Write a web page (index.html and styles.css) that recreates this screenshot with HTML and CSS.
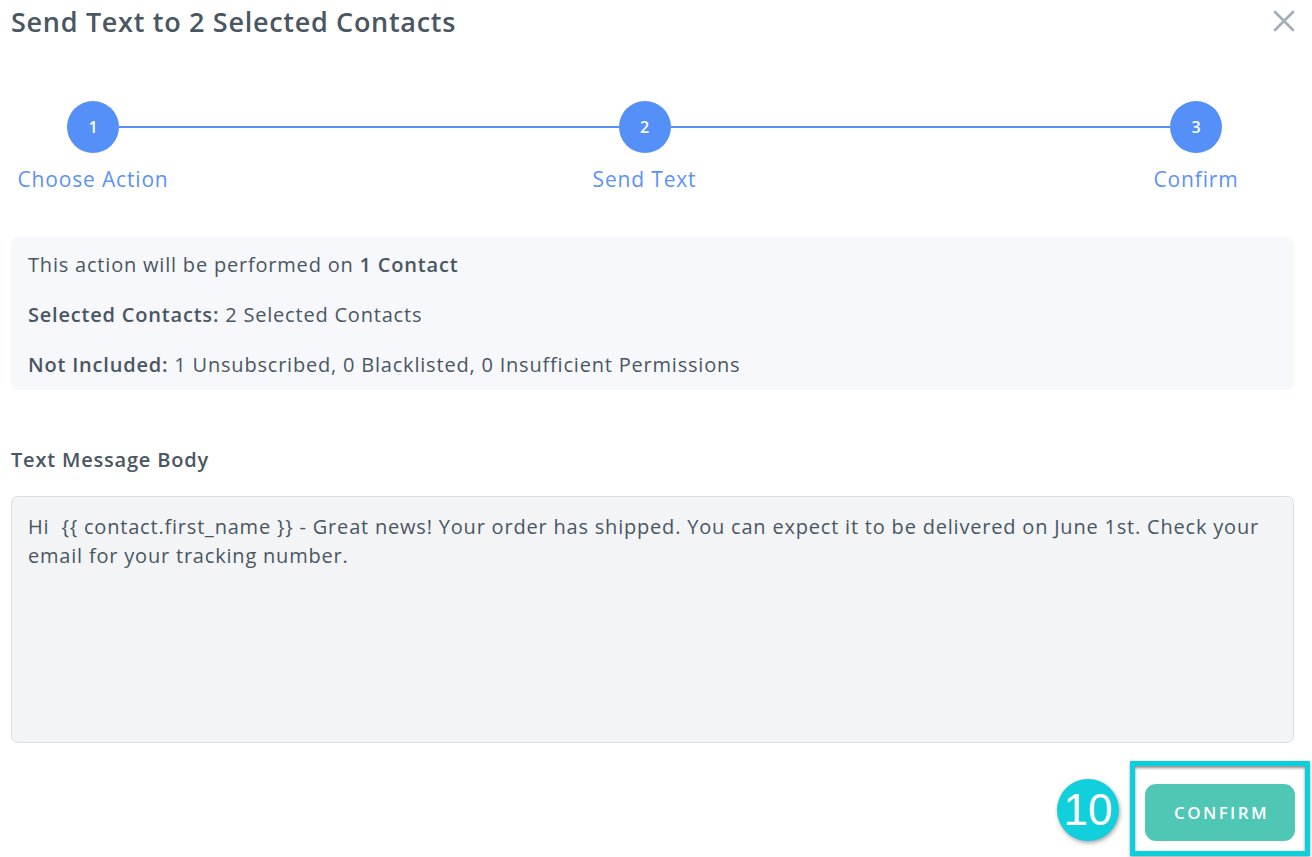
FILE: index.html
```html
<!DOCTYPE html>
<html lang="en">
<head>
<meta charset="utf-8">
<title>Send Text</title>
<link rel="stylesheet" href="styles.css">
</head>
<body>
<div class="modal">
  <header class="head">
    <h1 class="title">Send Text to 2 Selected Contacts</h1>
    <button class="close" aria-label="Close">
      <svg width="22" height="22" viewBox="0 0 22 22"><path d="M2 2 L20 20 M20 2 L2 20" stroke="#a3adb7" stroke-width="2.6" stroke-linecap="round"/></svg>
    </button>
  </header>

  <div class="stepper">
    <div class="step-row">
      <span class="dot">1</span><span class="bar"></span><span class="dot">2</span><span class="bar"></span><span class="dot">3</span>
    </div>
    <div class="label-row">
      <span class="step-label">Choose Action</span>
      <span class="step-label">Send Text</span>
      <span class="step-label">Confirm</span>
    </div>
  </div>

  <section class="info">
    <p>This action will be performed on <b>1 Contact</b></p>
    <p><b>Selected Contacts:</b> 2 Selected Contacts</p>
    <p><b>Not Included:</b> 1 Unsubscribed, 0 Blacklisted, 0 Insufficient Permissions</p>
  </section>

  <label class="field-label">Text Message Body</label>
  <div class="message">Hi &nbsp;{{ contact.first_name }} - Great news! Your order has shipped. You can expect it to be delivered on June 1st. Check your email for your tracking number.</div>

  <footer class="actions">
    <span class="badge">10</span>
    <div class="highlight">
      <button class="confirm">CONFIRM</button>
    </div>
  </footer>
</div>
</body>
</html>
```

FILE: styles.css
```css
html, body {
  margin: 0;
  padding: 0;
  background: #ffffff;
}
body {
  font-family: "Open Sans", "Liberation Sans", sans-serif;
  color: #4a5662;
  letter-spacing: 0.05em;
}
.modal {
  width: 1312px;
  height: 857px;
  box-sizing: border-box;
  padding: 0 18px 0 11px;
  display: flex;
  flex-direction: column;
  overflow: hidden;
}
.head {
  display: flex;
  justify-content: space-between;
  align-items: flex-start;
  height: 56px;
}
.title {
  margin: 4px 0 0;
  font-size: 27px;
  font-weight: 600;
  line-height: 36px;
  letter-spacing: 0.7px;
  color: #4a5662;
}
.close {
  margin: 10px 0 0;
  padding: 0;
  border: 0;
  background: none;
  width: 22px;
  height: 22px;
  margin-right: -1px;
}
.stepper {
  margin: 45px 0 0 -11px;
  width: 1289px;
}
.step-row {
  display: flex;
  align-items: center;
  padding: 0 67px;
}
.dot {
  width: 52px;
  height: 52px;
  border-radius: 50%;
  background: #5590f8;
  color: #fff;
  font-size: 16px;
  font-weight: 600;
  letter-spacing: 0;
  display: flex;
  align-items: center;
  justify-content: center;
  flex: none;
}
.bar {
  flex: 1;
  height: 2px;
  background: #5b8ff7;
}
.label-row {
  display: flex;
  justify-content: space-between;
  margin-top: 12px;
}
.step-label {
  width: 186px;
  text-align: center;
  font-size: 21px;
  line-height: 28px;
  letter-spacing: 0.04em;
  color: #5c92f6;
}
.info {
  margin-top: 44px;
  background: #f7f8fc;
  border-radius: 7px;
  padding: 14px 17px 12px;
  display: flex;
  flex-direction: column;
  gap: 23px;
}
.info p {
  margin: 0;
  font-size: 20px;
  line-height: 27px;
}
.info b {
  font-weight: 600;
}
.field-label {
  margin-top: 56px;
  font-size: 20px;
  font-weight: 600;
  line-height: 27px;
}
.message {
  margin-top: 23px;
  height: 247px;
  box-sizing: border-box;
  background: #f3f4f6;
  border: 1px solid #dadde2;
  border-radius: 7px;
  padding: 15px 16px;
  font-size: 20px;
  line-height: 29px;
}
.actions {
  display: flex;
  justify-content: flex-end;
  align-items: center;
  margin-top: 18px;
  margin-right: -16px;
  gap: 11px;
}
.badge {
  width: 62px;
  height: 62px;
  border-radius: 50%;
  background: #12cfdc;
  color: #fff;
  font-family: "Liberation Sans", sans-serif;
  font-size: 44px;
  letter-spacing: 0;
  display: flex;
  align-items: center;
  justify-content: center;
  box-shadow: 1px 2px 4px rgba(0,0,0,0.35);
  margin-top: 2px;
}
.highlight {
  border: 5px solid #0ccfdc;
  padding: 18px 10px 10px 10px;
  background: #fff;
  box-shadow: inset 0 2px 3px rgba(0,0,0,0.45), 0 2px 3px rgba(0,0,0,0.3);
}
.confirm {
  width: 150px;
  height: 57px;
  border: 0;
  border-radius: 11px;
  background: #4fc7b4;
  color: #fff;
  font-family: "Open Sans", sans-serif;
  font-size: 17px;
  font-weight: 600;
  letter-spacing: 2.4px;
  padding: 0 0 0 3px;
}
```
